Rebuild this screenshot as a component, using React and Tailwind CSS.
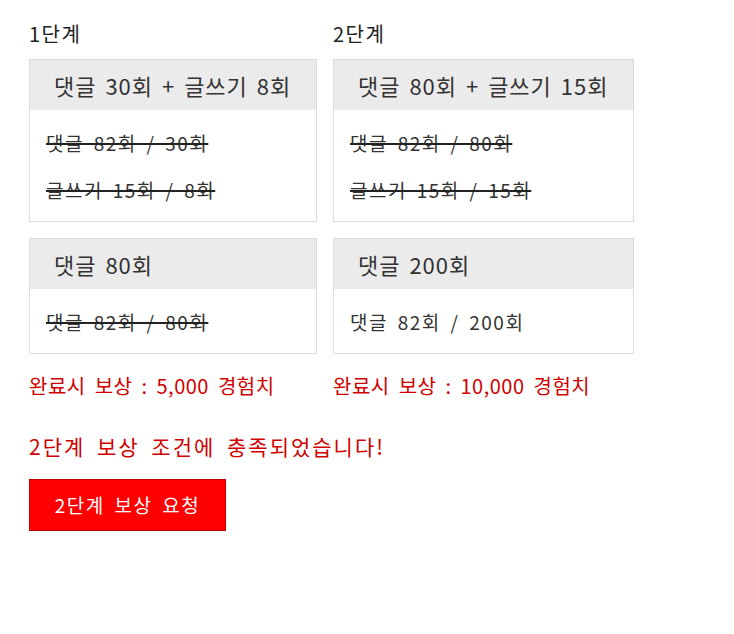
import React from "react";

const stages = [
  {
    label: "1단계",
    width: "w-[288px]",
    cards: [
      {
        title: "댓글 30회 + 글쓰기 8회",
        lines: [
          { text: "댓글 82회 / 30회", done: true },
          { text: "글쓰기 15회 / 8회", done: true },
        ],
      },
      {
        title: "댓글 80회",
        lines: [{ text: "댓글 82회 / 80회", done: true }],
      },
    ],
    reward: "완료시 보상 : 5,000 경험치",
  },
  {
    label: "2단계",
    width: "w-[301px]",
    cards: [
      {
        title: "댓글 80회 + 글쓰기 15회",
        lines: [
          { text: "댓글 82회 / 80회", done: true },
          { text: "글쓰기 15회 / 15회", done: true },
        ],
      },
      {
        title: "댓글 200회",
        lines: [{ text: "댓글 82회 / 200회", done: false }],
      },
    ],
    reward: "완료시 보상 : 10,000 경험치",
  },
];

function Card({ card }) {
  return (
    <div className="border border-[#dcdcdc] bg-white">
      <div className="h-[50px] flex items-center pl-[24px] bg-[#ebebeb] text-[22px] tracking-[1px] [word-spacing:3px] text-[#333] whitespace-nowrap">
        {card.title}
      </div>
      <div className="pt-[9px] pb-[8px] px-[16px]">
        {card.lines.map((line, i) => (
          <div
            key={i}
            className="h-[47px] leading-[47px] text-[19px] tracking-[1.5px] [word-spacing:4px] text-[#333] whitespace-nowrap"
          >
            <span
              className={
                line.done
                  ? "line-through decoration-2 decoration-[#222]"
                  : ""
              }
            >
              {line.text}
            </span>
          </div>
        ))}
      </div>
    </div>
  );
}

export default function App() {
  return (
    <div
      className="min-h-screen bg-white pl-[29px]"
      style={{ fontFamily: '"Noto Sans CJK KR", "Noto Sans", sans-serif' }}
    >
      <div className="flex gap-[16px]">
        {stages.map((stage) => (
          <div key={stage.label} className={`flex flex-col ${stage.width}`}>
            <div className="h-[59px] pt-[24px] leading-[20px] text-[20px] tracking-[1.5px] text-[#222]">
              {stage.label}
            </div>
            <div className="flex flex-col gap-[16px]">
              {stage.cards.map((card) => (
                <Card key={card.title} card={card} />
              ))}
            </div>
            <div className="mt-[20px] h-[24px] leading-[24px] text-[20px] tracking-[0.5px] [word-spacing:4px] text-[#d00000] whitespace-nowrap">
              {stage.reward}
            </div>
          </div>
        ))}
      </div>
      <div className="mt-[36px] leading-[24px] text-[21px] tracking-[2px] [word-spacing:5px] text-[#d00000] whitespace-nowrap">
        2단계 보상 조건에 충족되었습니다!
      </div>
      <button className="mt-[21px] w-[197px] h-[52px] bg-[#ff0000] border border-[#c00000] text-white text-[19px] tracking-[1.5px] [word-spacing:4px]">
        2단계 보상 요청
      </button>
    </div>
  );
}
